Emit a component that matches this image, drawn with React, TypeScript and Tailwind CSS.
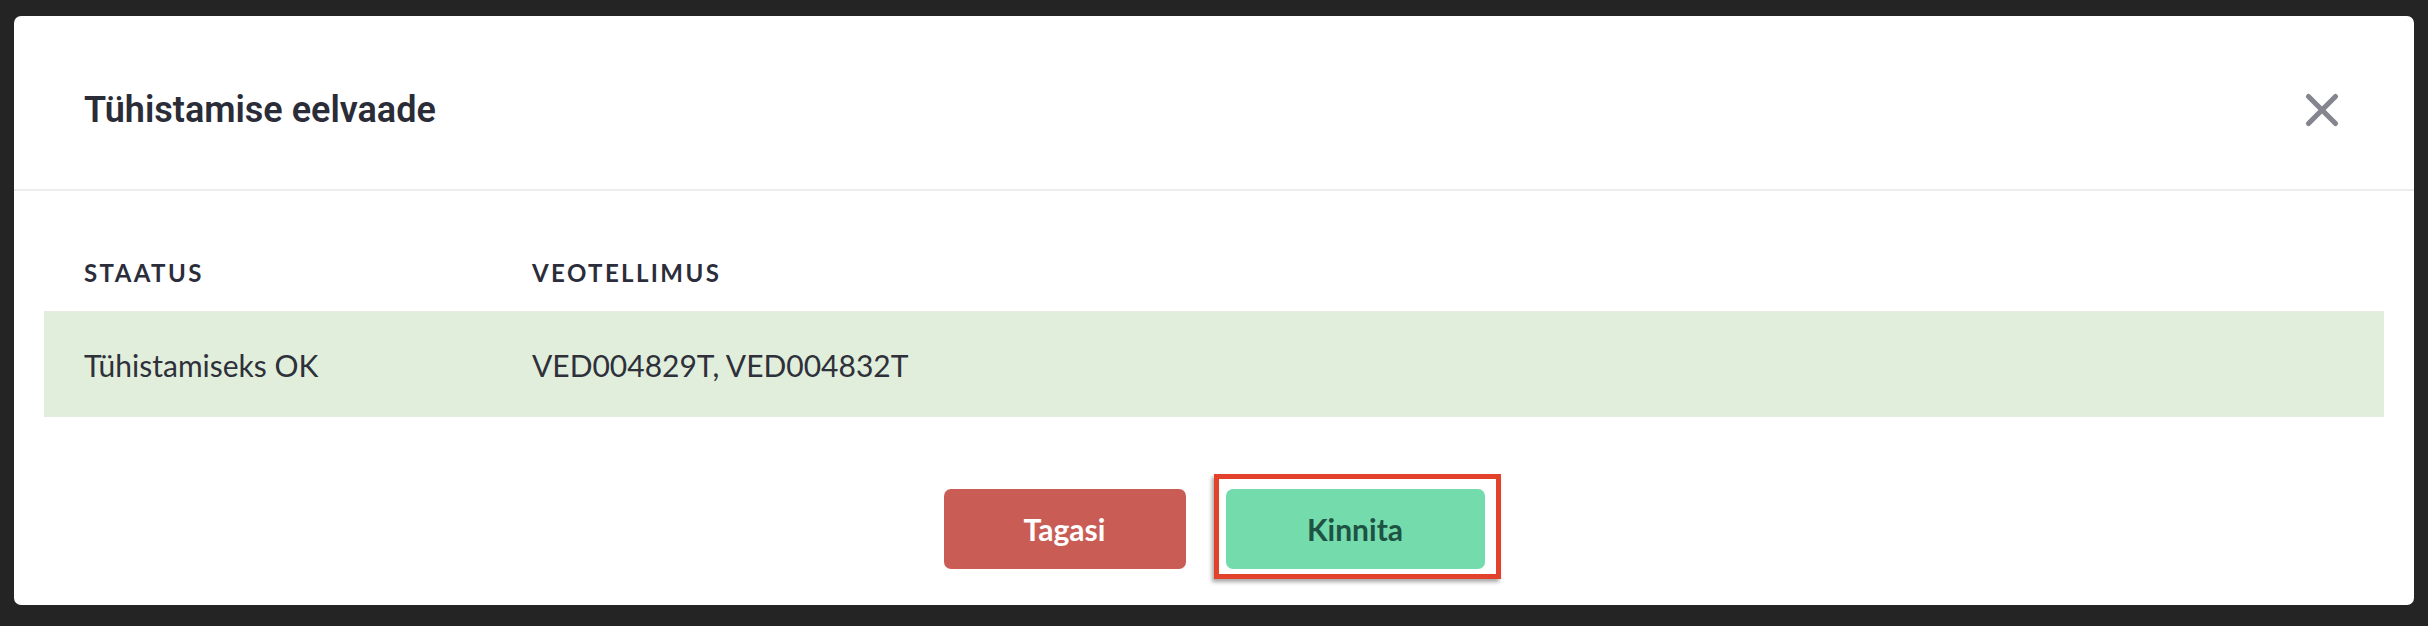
import { X } from 'lucide-react';

type CancelRow = {
  status: string;
  orders: string[];
};

const rows: CancelRow[] = [{ status: 'Tühistamiseks OK', orders: ['VED004829T', 'VED004832T'] }];

function CancelPreviewModal() {
  return (
    <div className="flex h-[589px] w-[2400px] flex-col rounded-[7px] bg-white">
      {/* pealkiri */}
      <div className="flex h-[175px] items-center justify-between border-b-2 border-[#ececee] pl-[70px] pr-[65px] pt-[15px]">
        <h2 className="font-['Roboto',sans-serif] text-[36px] font-semibold leading-none text-[#2a2c38]">
          Tühistamise eelvaade
        </h2>
        <button type="button" className="text-[#85858f]">
          <X size={54} strokeWidth={2.3} />
        </button>
      </div>

      {/* tabel */}
      <div className="px-[30px] font-['Lato',sans-serif]">
        <div className="grid grid-cols-[488px_1fr] pb-[26px] pt-[70px] text-[24px] font-bold uppercase leading-[24px] tracking-[0.1em] text-[#2b2d3a]">
          <div className="pl-[40px]">Staatus</div>
          <div>Veotellimus</div>
        </div>
        {rows.map((row) => (
          <div
            key={row.status}
            className="grid h-[106px] grid-cols-[488px_1fr] items-center border-t border-[#e6ebe3] bg-[#e1eedb] text-[30px] leading-none text-[#2e303a]"
          >
            <div className="pl-[40px]">{row.status}</div>
            <div>{row.orders.join(', ')}</div>
          </div>
        ))}
      </div>

      {/* nupud */}
      <div className="mt-[72px] flex justify-center gap-[40px] font-['Lato',sans-serif] text-[30px] font-bold">
        <button type="button" className="h-[80px] w-[242px] rounded-[7px] bg-[#c95d56] text-white">
          Tagasi
        </button>
        <div className="relative">
          <button type="button" className="h-[80px] w-[259px] rounded-[7px] bg-[#74dbad] text-[#1e5343]">
            Kinnita
          </button>
          <div className="pointer-events-none absolute -left-[12px] -right-[16px] -top-[15px] -bottom-[10px] border-[5px] border-[#e2412b] shadow-[-2px_3px_4px_rgba(0,0,0,0.35)]" />
        </div>
      </div>
    </div>
  );
}

export default function App() {
  return (
    <div className="h-[626px] w-[2428px] bg-[#242424] px-[14px] pt-[16px]">
      <CancelPreviewModal />
    </div>
  );
}
